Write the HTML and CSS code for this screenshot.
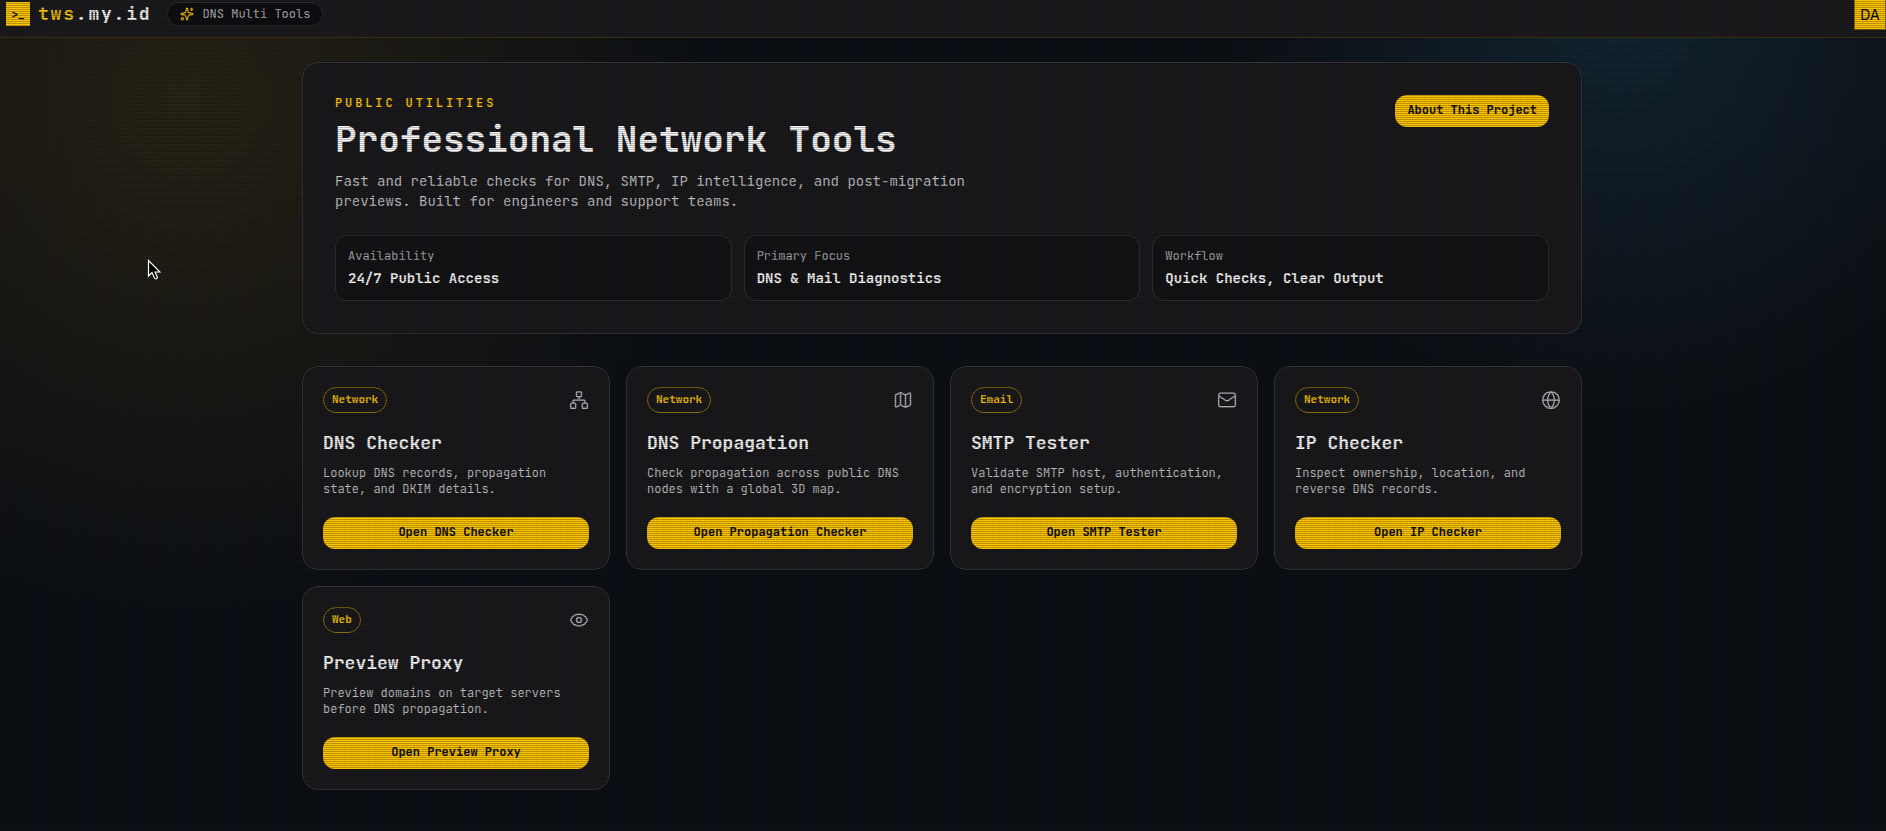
FILE: index.html
```html
<!DOCTYPE html>
<html lang="en">
<head>
<meta charset="utf-8">
<meta name="viewport" content="width=device-width, initial-scale=1">
<title>tws.my.id - DNS Multi Tools</title>
<link rel="stylesheet" href="styles.css">
</head>
<body>
<header class="topbar">
  <div class="brand">
    <a class="brand-link" href="#"><span class="brand-mark">&gt;_</span><span class="brand-name"><span class="accent">tws</span>.my.id</span></a>
    <span class="brand-chip">
      <svg class="icon-small" viewBox="0 0 24 24" aria-hidden="true"><path d="M11.017 2.814a1 1 0 0 1 1.966 0l1.051 5.558a2 2 0 0 0 1.594 1.594l5.558 1.051a1 1 0 0 1 0 1.966l-5.558 1.051a2 2 0 0 0-1.594 1.594l-1.051 5.558a1 1 0 0 1-1.966 0l-1.051-5.558a2 2 0 0 0-1.594-1.594l-5.558-1.051a1 1 0 0 1 0-1.966l5.558-1.051a2 2 0 0 0 1.594-1.594z"/><path d="M20 2v4M22 4h-4"/><circle cx="4" cy="20" r="2"/></svg>
      DNS Multi Tools
    </span>
  </div>
  <button class="avatar" type="button">DA</button>
</header>

<main class="page">
  <section class="hero">
    <div class="hero-head">
      <div>
        <p class="eyebrow">PUBLIC UTILITIES</p>
        <h1 class="hero-title">Professional Network Tools</h1>
        <p class="hero-text">Fast and reliable checks for DNS, SMTP, IP intelligence, and post-migration previews. Built for engineers and support teams.</p>
      </div>
      <a class="button" href="#">About This Project</a>
    </div>
    <dl class="stats">
      <div class="stat"><dt>Availability</dt><dd>24/7 Public Access</dd></div>
      <div class="stat"><dt>Primary Focus</dt><dd>DNS &amp; Mail Diagnostics</dd></div>
      <div class="stat"><dt>Workflow</dt><dd>Quick Checks, Clear Output</dd></div>
    </dl>
  </section>

  <section class="tools">
    <article class="card">
      <div class="card-head"><span class="tag">Network</span>
        <svg class="icon" viewBox="0 0 24 24" aria-hidden="true"><rect x="16" y="16" width="6" height="6" rx="1"/><rect x="2" y="16" width="6" height="6" rx="1"/><rect x="9" y="2" width="6" height="6" rx="1"/><path d="M5 16v-3a1 1 0 0 1 1-1h12a1 1 0 0 1 1 1v3M12 12V8"/></svg>
      </div>
      <h2 class="card-title">DNS Checker</h2>
      <p class="card-text">Lookup DNS records, propagation state, and DKIM details.</p>
      <a class="button" href="#">Open DNS Checker</a>
    </article>
    <article class="card">
      <div class="card-head"><span class="tag">Network</span>
        <svg class="icon" viewBox="0 0 24 24" aria-hidden="true"><path d="M14.106 5.553a2 2 0 0 0 1.788 0l3.659-1.83A1 1 0 0 1 21 4.619v12.764a1 1 0 0 1-.553.894l-4.553 2.277a2 2 0 0 1-1.788 0l-4.212-2.106a2 2 0 0 0-1.788 0l-3.659 1.83A1 1 0 0 1 3 19.381V6.618a1 1 0 0 1 .553-.894l4.553-2.277a2 2 0 0 1 1.788 0zM15 5.764v15M9 3.236v15"/></svg>
      </div>
      <h2 class="card-title">DNS Propagation</h2>
      <p class="card-text">Check propagation across public DNS nodes with a global 3D map.</p>
      <a class="button" href="#">Open Propagation Checker</a>
    </article>
    <article class="card">
      <div class="card-head"><span class="tag">Email</span>
        <svg class="icon" viewBox="0 0 24 24" aria-hidden="true"><path d="m22 7-8.991 5.727a2 2 0 0 1-2.009 0L2 7"/><rect x="2" y="4" width="20" height="16" rx="2"/></svg>
      </div>
      <h2 class="card-title">SMTP Tester</h2>
      <p class="card-text">Validate SMTP host, authentication, and encryption setup.</p>
      <a class="button" href="#">Open SMTP Tester</a>
    </article>
    <article class="card">
      <div class="card-head"><span class="tag">Network</span>
        <svg class="icon" viewBox="0 0 24 24" aria-hidden="true"><circle cx="12" cy="12" r="10"/><path d="M12 2a14.5 14.5 0 0 0 0 20 14.5 14.5 0 0 0 0-20M2 12h20"/></svg>
      </div>
      <h2 class="card-title">IP Checker</h2>
      <p class="card-text">Inspect ownership, location, and reverse DNS records.</p>
      <a class="button" href="#">Open IP Checker</a>
    </article>
    <article class="card">
      <div class="card-head"><span class="tag">Web</span>
        <svg class="icon" viewBox="0 0 24 24" aria-hidden="true"><path d="M2.062 12.348a1 1 0 0 1 0-.696 10.75 10.75 0 0 1 19.876 0 1 1 0 0 1 0 .696 10.75 10.75 0 0 1-19.876 0"/><circle cx="12" cy="12" r="3"/></svg>
      </div>
      <h2 class="card-title">Preview Proxy</h2>
      <p class="card-text">Preview domains on target servers before DNS propagation.</p>
      <a class="button" href="#">Open Preview Proxy</a>
    </article>
  </section>
</main>

<div class="scanlines"></div>
<svg class="pointer" viewBox="0 0 14 22" aria-hidden="true"><path d="M1.500 1.500v15.500l3.500-3.500 2.500 5.500q1.500 2 3-.5L8 13h5z"/></svg>
</body>
</html>
```

FILE: styles.css
```css
* {
  box-sizing: border-box;
}

body {
  margin: 0;
  min-height: 100vh;
  color: #fff;
  font-family: "JetBrains Mono", "DejaVu Sans Mono", monospace;
  background-color: #0b0f14;
  background-image:
    radial-gradient(circle at 10% 12%, rgba(250, 190, 21, 0.12), transparent 28%),
    radial-gradient(circle at 86% 2%, rgba(56, 180, 248, 0.14), transparent 22%);
}

h1, h2, p, dl, dd {
  margin: 0;
}

a {
  color: inherit;
  text-decoration: none;
}

.topbar {
  display: flex;
  align-items: flex-start;
  justify-content: space-between;
  padding: 0 0 7px 6px;
  background: #1a1a1c;
  border-bottom: 1px solid #45390f;
}

.brand {
  display: flex;
  align-items: center;
  gap: 16px;
  padding-top: 2px;
}

.brand-link {
  display: flex;
  align-items: center;
  gap: 8px;
}

.brand-mark {
  display: grid;
  place-items: center;
  width: 24px;
  height: 24px;
  background: #ffc800;
  color: #09090b;
  font-size: 11px;
  font-weight: 700;
}

.brand-name {
  font-size: 18px;
  line-height: 24px;
  font-weight: 700;
  letter-spacing: 0.1em;
}

.accent {
  color: #ffc800;
}

.brand-chip {
  display: flex;
  align-items: center;
  gap: 8px;
  padding: 3px 12px;
  border: 1px solid #2a2a2e;
  border-radius: 12px;
  background: #0c0c0f;
  color: #b8b8ba;
  font-size: 12px;
  line-height: 16px;
}

.icon,
.icon-small {
  flex: none;
  fill: none;
  stroke: currentColor;
  stroke-width: 2;
  stroke-linecap: round;
  stroke-linejoin: round;
}

.icon {
  width: 20px;
  height: 20px;
  color: #b0b0b4;
  stroke-width: 1.8;
}

.icon-small {
  width: 14px;
  height: 14px;
  color: #ffc800;
}

.avatar {
  width: 32px;
  height: 30px;
  padding: 0;
  border: 1px solid #8a6d08;
  border-top: 0;
  background: #ffc800;
  color: #000;
  font: 14px/20px Inter, "Liberation Sans", sans-serif;
}

.page {
  max-width: 1330px;
  margin: 0 auto;
  padding: 24px 26px 24px 24px;
}

.hero {
  padding: 32px;
  border: 1px solid #343438;
  border-radius: 16px;
  background: #19191b;
}

.hero-head {
  display: flex;
  align-items: flex-start;
  justify-content: space-between;
  gap: 24px;
}

.eyebrow {
  color: #ffc800;
  font-size: 12px;
  line-height: 16px;
  font-weight: 600;
  letter-spacing: 0.24em;
}

.hero-title {
  margin-top: 8px;
  font-size: 36px;
  line-height: 40px;
  font-weight: 700;
}

.hero-text {
  max-width: 672px;
  margin-top: 12px;
  color: #c6c6c8;
  font-size: 14px;
  line-height: 20px;
}

.button {
  display: block;
  padding: 7px 12px 9px;
  border-radius: 12px;
  background: #ffc800;
  color: #09090b;
  font-size: 12px;
  line-height: 16px;
  font-weight: 700;
  text-align: center;
}

.stats {
  display: grid;
  grid-template-columns: repeat(3, 1fr);
  gap: 12px;
  margin-top: 24px;
}

.stat {
  padding: 12px;
  border: 1px solid #2e2e32;
  border-radius: 12px;
  background: #121214;
}

.stat dt {
  color: #adadaf;
  font-size: 12px;
  line-height: 16px;
}

.stat dd {
  margin-top: 4px;
  font-size: 14px;
  line-height: 20px;
  font-weight: 700;
}

.tools {
  display: grid;
  grid-template-columns: repeat(4, 1fr);
  gap: 16px;
  margin-top: 32px;
}

.card {
  padding: 20px;
  border: 1px solid #343438;
  border-radius: 16px;
  background: #19191b;
}

.card-head {
  display: flex;
  align-items: center;
  justify-content: space-between;
}

.tag {
  padding: 3px 8px 5px;
  border: 1px solid #8f7208;
  border-radius: 13px;
  color: #ffc800;
  font-size: 11px;
  line-height: 16px;
  font-weight: 700;
}

.card-title {
  margin-top: 16px;
  font-size: 18px;
  line-height: 28px;
  font-weight: 700;
}

.card-text {
  margin: 8px 0 20px;
  color: #c0c0c2;
  font-size: 12px;
  line-height: 16px;
}

/* CRT overlay: horizontal scanlines over a faint RGB column mask */
.scanlines {
  position: fixed;
  inset: 0;
  pointer-events: none;
  background-image:
    linear-gradient(rgba(18, 16, 16, 0) 50%, rgba(0, 0, 0, 0.25) 50%),
    linear-gradient(90deg, rgba(255, 0, 0, 0.06), rgba(0, 255, 0, 0.02), rgba(0, 0, 255, 0.06));
  background-size: 100% 2px, 3px 100%;
}

.pointer {
  position: absolute;
  top: 259px;
  left: 147px;
  width: 14px;
  height: 22px;
  fill: #000;
  stroke: #fff;
  stroke-width: 1.2;
}

@media (max-width: 1100px) {
  .tools {
    grid-template-columns: repeat(2, 1fr);
  }
}

@media (max-width: 700px) {
  .hero-head {
    flex-direction: column;
  }

  .tools,
  .stats {
    grid-template-columns: 1fr;
  }
}
```
